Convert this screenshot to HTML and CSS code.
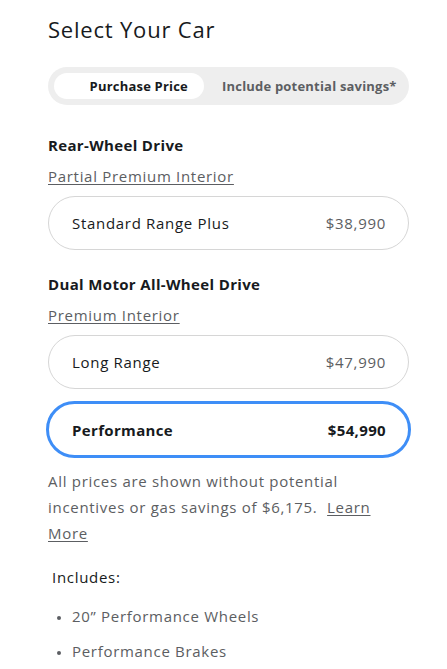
FILE: index.html
```html
<!DOCTYPE html>
<html>
<head>
<meta charset="utf-8">
<link rel="stylesheet" href="styles.css">
</head>
<body>
<main class="page">
  <h1 class="title">Select Your Car</h1>
  <div class="toggle">
    <div class="toggle-opt active"><span>Purchase Price</span></div>
    <div class="toggle-opt"><span>Include potential savings*</span></div>
  </div>

  <section class="group">
    <h2 class="group-title">Rear-Wheel Drive</h2>
    <a class="interior">Partial Premium Interior</a>
    <div class="card"><span>Standard Range Plus</span><span class="price">$38,990</span></div>
  </section>

  <section class="group">
    <h2 class="group-title">Dual Motor All-Wheel Drive</h2>
    <a class="interior">Premium Interior</a>
    <div class="card"><span>Long Range</span><span class="price">$47,990</span></div>
    <div class="card selected"><span>Performance</span><span class="price">$54,990</span></div>
  </section>

  <p class="note">All prices are shown without potential incentives or gas savings of $6,175. <a class="link">Learn</a> <a class="link plain">More</a></p>

  <div class="includes">Includes:</div>
  <ul class="features">
    <li>20” Performance Wheels</li>
    <li>Performance Brakes</li>
  </ul>
</main>
</body>
</html>
```
FILE: styles.css
```css
* { box-sizing: border-box; }
html, body { margin: 0; padding: 0; background: #fff; }
body { font-family: "Open Sans", "Liberation Sans", sans-serif; color: #171a20; letter-spacing: 0.7px; }
.page { width: 447px; padding: 14px 38px 0 48px; }
.title { margin: 0; font-size: 22px; font-weight: 400; line-height: 30px; color: #171a20; letter-spacing: 0.8px; }
.toggle { margin-top: 23px; height: 38px; background: #eeeeee; border-radius: 19px; display: flex; align-items: center; padding: 0 6px; letter-spacing: 0.2px; }
.toggle-opt { height: 26px; display: flex; align-items: center; font-size: 13px; font-weight: 700; color: #5c5e62; }
.toggle-opt:first-child { width: 150px; justify-content: flex-end; padding-right: 16px; }
.toggle-opt:last-child { flex: 1; padding-left: 18px; }
.toggle-opt.active { background: #fff; border-radius: 13px; color: #171a20; }
.group:first-of-type { margin-top: 30px; }
.group + .group { margin-top: 24px; }
.group-title { margin: 0; font-size: 15px; font-weight: 700; line-height: 20px; letter-spacing: 0.35px; }
.interior { display: inline-block; margin-top: 11px; font-size: 15px; line-height: 20px; color: #5c5e62; text-decoration: underline; text-underline-offset: 2px; }
.card { margin-top: 9px; height: 54px; border: 1px solid #d6d6d6; border-radius: 27px; display: flex; align-items: center; justify-content: space-between; padding: 0 22px 0 23px; font-size: 15px; }
.card + .card { margin-top: 12px; }
.card .price { color: #5c5e62; }
.card.selected { height: 57px; margin-left: -2px; margin-right: -2px; border: 3px solid #3e8ef7; border-radius: 29px; font-weight: 700; padding: 0 22px 0 23px; letter-spacing: 0.35px; }
.card.selected .price { color: #171a20; }
.note { margin: 10px 0 0; font-size: 15px; line-height: 26px; color: #5c5e62; }
.link { margin-left: 5px; color: #5c5e62; text-decoration: underline; text-underline-offset: 2px; }
.link.plain { margin-left: 0; }
.includes { margin-top: 21px; padding-left: 4px; font-size: 15px; line-height: 20px; color: #171a20; }
.features { margin: 19px 0 0; padding-left: 24px; font-size: 15px; line-height: 20px; color: #5c5e62; }
.features li { margin-bottom: 15px; }
.features li::marker { font-size: 12px; }
```
